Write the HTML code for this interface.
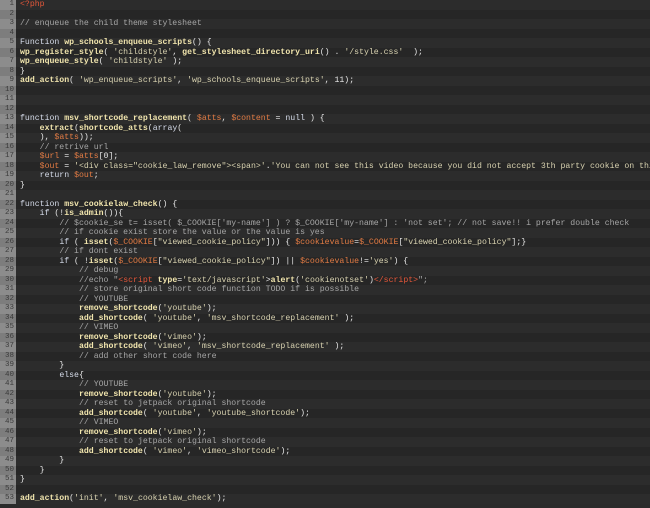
<!DOCTYPE html>
<html><head><meta charset="utf-8"><style>
html,body{margin:0;padding:0;background:#2b2b2b;width:650px;height:508px;overflow:hidden}
.w{position:relative;width:650px;height:508px;overflow:hidden;font-family:"Liberation Mono",monospace;font-size:8.2px;line-height:9.5px}
.l{height:9.5px;white-space:pre;position:relative;background:#2c2c2c;color:#e6e6e6;overflow:hidden;width:650px}
.l:nth-child(even){background:#262626}
.n{position:absolute;left:0;top:0;width:16px;height:9.5px;background:#8c8c8c;color:#3a3a3a;text-align:right;box-sizing:border-box;padding-right:2px;font-size:7.5px}
.l:nth-child(even) .n{background:#7d7d7d}
.t{position:absolute;left:20px;top:0}
.k{color:#d6dcea}.f{color:#f2e6ae;font-weight:bold}.s{color:#d8d2b0}.v{color:#e47c44}.c{color:#a6a6a6}.r{color:#e4573a}
</style></head><body><div class="w">
<div class="l"><span class="n">1</span><span class="t"><span class="r">&lt;?php</span></span></div>
<div class="l"><span class="n">2</span><span class="t"></span></div>
<div class="l"><span class="n">3</span><span class="t"><span class="c">// enqueue the child theme stylesheet</span></span></div>
<div class="l"><span class="n">4</span><span class="t"></span></div>
<div class="l"><span class="n">5</span><span class="t"><span class="k">Function</span> <span class="f">wp_schools_enqueue_scripts</span>() {</span></div>
<div class="l"><span class="n">6</span><span class="t"><span class="f">wp_register_style</span>( <span class="s">'childstyle'</span>, <span class="f">get_stylesheet_directory_uri</span>() . <span class="s">'/style.css'</span>  );</span></div>
<div class="l"><span class="n">7</span><span class="t"><span class="f">wp_enqueue_style</span>( <span class="s">'childstyle'</span> );</span></div>
<div class="l"><span class="n">8</span><span class="t">}</span></div>
<div class="l"><span class="n">9</span><span class="t"><span class="f">add_action</span>( <span class="s">'wp_enqueue_scripts'</span>, <span class="s">'wp_schools_enqueue_scripts'</span>, 11);</span></div>
<div class="l"><span class="n">10</span><span class="t"></span></div>
<div class="l"><span class="n">11</span><span class="t"></span></div>
<div class="l"><span class="n">12</span><span class="t"></span></div>
<div class="l"><span class="n">13</span><span class="t"><span class="k">function</span> <span class="f">msv_shortcode_replacement</span>( <span class="v">$atts</span>, <span class="v">$content</span> = <span class="k">null</span> ) {</span></div>
<div class="l"><span class="n">14</span><span class="t">    <span class="f">extract</span>(<span class="f">shortcode_atts</span>(<span class="k">array</span>(</span></div>
<div class="l"><span class="n">15</span><span class="t">    ), <span class="v">$atts</span>));</span></div>
<div class="l"><span class="n">16</span><span class="t">    <span class="c">// retrive url</span></span></div>
<div class="l"><span class="n">17</span><span class="t">    <span class="v">$url</span> = <span class="v">$atts</span>[0];</span></div>
<div class="l"><span class="n">18</span><span class="t">    <span class="v">$out</span> = <span class="s">'&lt;div class="cookie_law_remove"&gt;&lt;span&gt;'</span>.<span class="s">'You can not see this video because you did not accept 3th party cookie on this sites.</span></span></div>
<div class="l"><span class="n">19</span><span class="t">    <span class="k">return</span> <span class="v">$out</span>;</span></div>
<div class="l"><span class="n">20</span><span class="t">}</span></div>
<div class="l"><span class="n">21</span><span class="t"></span></div>
<div class="l"><span class="n">22</span><span class="t"><span class="k">function</span> <span class="f">msv_cookielaw_check</span>() {</span></div>
<div class="l"><span class="n">23</span><span class="t">    <span class="k">if</span> (!<span class="f">is_admin</span>()){</span></div>
<div class="l"><span class="n">24</span><span class="t">        <span class="c">// $cookie_se t= isset( $_COOKIE['my-name'] ) ? $_COOKIE['my-name'] : 'not set'; // not save!! i prefer double check</span></span></div>
<div class="l"><span class="n">25</span><span class="t">        <span class="c">// if cookie exist store the value or the value is yes</span></span></div>
<div class="l"><span class="n">26</span><span class="t">        <span class="k">if</span> ( <span class="f">isset</span>(<span class="v">$_COOKIE</span>[<span class="s">"viewed_cookie_policy"</span>])) { <span class="v">$cookievalue</span>=<span class="v">$_COOKIE</span>[<span class="s">"viewed_cookie_policy"</span>];}</span></div>
<div class="l"><span class="n">27</span><span class="t">        <span class="c">// if dont exist</span></span></div>
<div class="l"><span class="n">28</span><span class="t">        <span class="k">if</span> ( !<span class="f">isset</span>(<span class="v">$_COOKIE</span>[<span class="s">"viewed_cookie_policy"</span>]) || <span class="v">$cookievalue</span>!=<span class="s">'yes'</span>) {</span></div>
<div class="l"><span class="n">29</span><span class="t">            <span class="c">// debug</span></span></div>
<div class="l"><span class="n">30</span><span class="t">            <span class="c">//echo "</span><span class="r">&lt;script</span> <span class="f">type</span>=<span class="s">'text/javascript'</span>&gt;<span class="f">alert</span>(<span class="s">'cookienotset'</span>)<span class="r">&lt;/script&gt;</span><span class="c">";</span></span></div>
<div class="l"><span class="n">31</span><span class="t">            <span class="c">// store original short code function TODO if is possible</span></span></div>
<div class="l"><span class="n">32</span><span class="t">            <span class="c">// YOUTUBE</span></span></div>
<div class="l"><span class="n">33</span><span class="t">            <span class="f">remove_shortcode</span>(<span class="s">'youtube'</span>);</span></div>
<div class="l"><span class="n">34</span><span class="t">            <span class="f">add_shortcode</span>( <span class="s">'youtube'</span>, <span class="s">'msv_shortcode_replacement'</span> );</span></div>
<div class="l"><span class="n">35</span><span class="t">            <span class="c">// VIMEO</span></span></div>
<div class="l"><span class="n">36</span><span class="t">            <span class="f">remove_shortcode</span>(<span class="s">'vimeo'</span>);</span></div>
<div class="l"><span class="n">37</span><span class="t">            <span class="f">add_shortcode</span>( <span class="s">'vimeo'</span>, <span class="s">'msv_shortcode_replacement'</span> );</span></div>
<div class="l"><span class="n">38</span><span class="t">            <span class="c">// add other short code here</span></span></div>
<div class="l"><span class="n">39</span><span class="t">        }</span></div>
<div class="l"><span class="n">40</span><span class="t">        <span class="k">else</span>{</span></div>
<div class="l"><span class="n">41</span><span class="t">            <span class="c">// YOUTUBE</span></span></div>
<div class="l"><span class="n">42</span><span class="t">            <span class="f">remove_shortcode</span>(<span class="s">'youtube'</span>);</span></div>
<div class="l"><span class="n">43</span><span class="t">            <span class="c">// reset to jetpack original shortcode</span></span></div>
<div class="l"><span class="n">44</span><span class="t">            <span class="f">add_shortcode</span>( <span class="s">'youtube'</span>, <span class="s">'youtube_shortcode'</span>);</span></div>
<div class="l"><span class="n">45</span><span class="t">            <span class="c">// VIMEO</span></span></div>
<div class="l"><span class="n">46</span><span class="t">            <span class="f">remove_shortcode</span>(<span class="s">'vimeo'</span>);</span></div>
<div class="l"><span class="n">47</span><span class="t">            <span class="c">// reset to jetpack original shortcode</span></span></div>
<div class="l"><span class="n">48</span><span class="t">            <span class="f">add_shortcode</span>( <span class="s">'vimeo'</span>, <span class="s">'vimeo_shortcode'</span>);</span></div>
<div class="l"><span class="n">49</span><span class="t">        }</span></div>
<div class="l"><span class="n">50</span><span class="t">    }</span></div>
<div class="l"><span class="n">51</span><span class="t">}</span></div>
<div class="l"><span class="n">52</span><span class="t"></span></div>
<div class="l"><span class="n">53</span><span class="t"><span class="f">add_action</span>(<span class="s">'init'</span>, <span class="s">'msv_cookielaw_check'</span>);</span></div>
</div></body></html>
